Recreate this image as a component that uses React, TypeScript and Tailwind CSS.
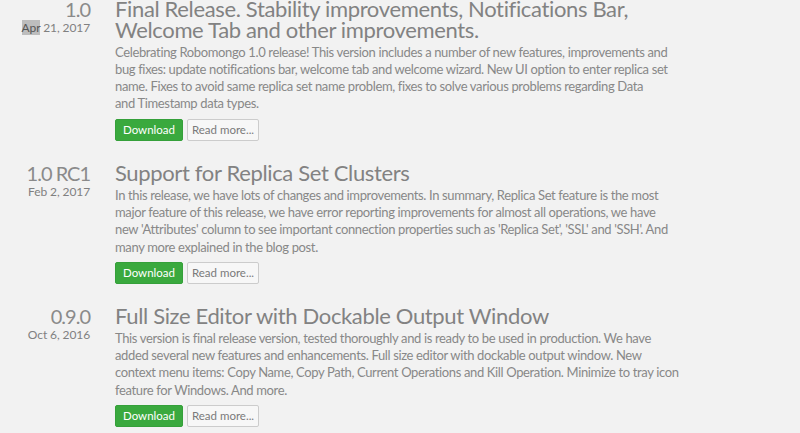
import React from "react";

type Release = {
  version: string;
  date: React.ReactNode;
  title: string[];
  body: string[];
};

const releases: Release[] = [
  {
    version: "1.0",
    date: (
      <>
        <span className="bg-[#bdbdbd] text-[#555]">Apr</span> 21, 2017
      </>
    ),
    title: ["Final Release. Stability improvements, Notifications Bar,", "Welcome Tab and other improvements."],
    body: [
      "Celebrating Robomongo 1.0 release! This version includes a number of new features, improvements and",
      "bug fixes: update notifications bar, welcome tab and welcome wizard. New UI option to enter replica set",
      "name. Fixes to avoid same replica set name problem, fixes to solve various problems regarding Data",
      "and Timestamp data types.",
    ],
  },
  {
    version: "1.0 RC1",
    date: "Feb 2, 2017",
    title: ["Support for Replica Set Clusters"],
    body: [
      "In this release, we have lots of changes and improvements. In summary, Replica Set feature is the most",
      "major feature of this release, we have error reporting improvements for almost all operations, we have",
      "new 'Attributes' column to see important connection properties such as 'Replica Set', 'SSL' and 'SSH'. And",
      "many more explained in the blog post.",
    ],
  },
  {
    version: "0.9.0",
    date: "Oct 6, 2016",
    title: ["Full Size Editor with Dockable Output Window"],
    body: [
      "This version is final release version, tested thoroughly and is ready to be used in production. We have",
      "added several new features and enhancements. Full size editor with dockable output window. New",
      "context menu items: Copy Name, Copy Path, Current Operations and Kill Operation. Minimize to tray icon",
      "feature for Windows. And more.",
    ],
  },
];

const App: React.FC = () => {
  return (
    <div className="h-screen w-full bg-[#f2f2f2] font-['Lato',sans-serif] text-[#808080] overflow-hidden">
      <div className="flex flex-col gap-[21.5px] -mt-[2px]">
        {releases.map((r) => (
          <div key={r.version} className="flex">
            <div className="w-[90px] shrink-0 text-right">
              <div className="text-[20px] leading-[22px] tracking-[-1px] text-[#8a8a8a]">{r.version}</div>
              <div className="text-[12px] leading-[16px] tracking-[-0.1px] text-[#808080]">{r.date}</div>
            </div>
            <div className="ml-[25px]">
              <h2 className="text-[22px] leading-[21px] tracking-[-0.35px] text-[#828282]">
                {r.title.map((t) => (
                  <div key={t} className="whitespace-nowrap">{t}</div>
                ))}
              </h2>
              <div className="mt-[3.5px] text-[13px] leading-[17.3px] tracking-[-0.36px] text-[#888]">
                {r.body.map((l) => (
                  <div key={l} className="whitespace-nowrap">{l}</div>
                ))}
              </div>
              <div className="flex gap-[4px] mt-[6px]">
                <button className="h-[22px] w-[68px] rounded-[2px] bg-[#3aa93e] text-white text-[11.5px] border border-[#35a03a]">
                  Download
                </button>
                <button className="h-[22px] w-[72px] rounded-[2px] bg-[#f7f7f7] text-[#7a7a7a] text-[11.5px] border border-[#cccccc]">
                  Read more...
                </button>
              </div>
            </div>
          </div>
        ))}
      </div>
    </div>
  );
};

export default App;
